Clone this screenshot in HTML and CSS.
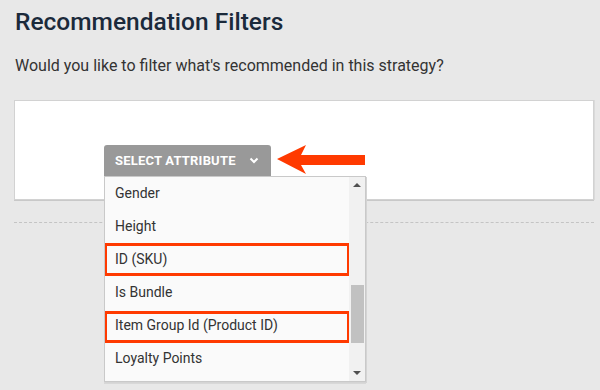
FILE: index.html
```html
<!DOCTYPE html>
<html>
<head>
<meta charset="utf-8">
<link rel="stylesheet" href="styles.css">
</head>
<body>
<div class="page">
  <h1 class="title">Recommendation Filters</h1>
  <p class="lead">Would you like to filter what's recommended in this strategy?</p>
  <div class="card">
    <div class="picker">
      <button class="select-btn">SELECT ATTRIBUTE
        <svg class="chev" width="10" height="7" viewBox="0 0 10 7"><path d="M1.5 1.5 L5 5 L8.5 1.5" fill="none" stroke="#fff" stroke-width="2"/></svg>
      </button>
      <svg class="pointer" width="90" height="30" viewBox="0 0 90 30"><polygon points="0,14 29,0 24,10 88,10 88,20 24,20 29,29" fill="#ff3a00"/></svg>
      <div class="menu">
        <ul class="options">
          <li class="opt">Gender</li>
          <li class="opt">Height</li>
          <li class="opt marked">ID (SKU)</li>
          <li class="opt">Is Bundle</li>
          <li class="opt marked marked-low">Item Group Id (Product ID)</li>
          <li class="opt">Loyalty Points</li>
        </ul>
        <div class="scroll">
          <span class="tri up"></span>
          <div class="track"><div class="thumb"></div></div>
          <span class="tri down"></span>
        </div>
      </div>
    </div>
  </div>
  <div class="divider"></div>
</div>
</body>
</html>
```
FILE: styles.css
```css
html, body {
  margin: 0;
  padding: 0;
  background: #e8e8e8;
  font-family: Roboto, "Liberation Sans", sans-serif;
}
.page {
  padding: 0 6px 0 14px;
  height: 390px;
  overflow: hidden;
}
.title {
  margin: 0;
  padding-top: 7px;
  font-size: 24.5px;
  font-weight: 500;
  line-height: 30px;
  color: #1b2a3b;
  padding-left: 1px;
}
.lead {
  margin: 19px 0 0 1px;
  font-size: 16px;
  line-height: 20px;
  color: #333;
}
.card {
  margin-top: 24px;
  background: #fff;
  border: 1px solid #d2d2d2;
  box-shadow: 0 1px 0 #c8c8c8, 1px 0 0 #dadada;
  padding: 44px 0 0 89px;
  box-sizing: border-box;
  height: 100px;
}
.picker {
  position: relative;
  width: 167px;
}
.select-btn {
  display: flex;
  align-items: center;
  justify-content: space-between;
  width: 167px;
  height: 31px;
  padding: 0 12px 0 11px;
  border: none;
  border-radius: 3px 3px 0 0;
  background: #999;
  color: #fff;
  font-family: Roboto, "Liberation Sans", sans-serif;
  font-weight: 700;
  font-size: 13px;
  letter-spacing: 0.2px;
}
.pointer {
  position: absolute;
  left: 173px;
  top: 0;
}
.menu {
  position: absolute;
  left: 0;
  top: 31px;
  width: 262px;
  height: 206px;
  box-sizing: border-box;
  background: #fafafa;
  border: 1px solid #c9c9c9;
  box-shadow: 1px 1px 0 #d4d4d4, 0 2px 0 #d8d8d8;
  display: flex;
  z-index: 2;
}
.options {
  list-style: none;
  margin: 0;
  padding: 0;
  flex: 1;
  overflow: hidden;
}
.opt {
  position: relative;
  height: 33px;
  line-height: 33px;
  padding-left: 10px;
  font-size: 14px;
  color: #333;
}
.marked::after {
  content: "";
  position: absolute;
  left: -1px;
  right: -1px;
  top: 0;
  bottom: 0;
  border: 3px solid #ff3a00;
}
.marked-low::after { top: 2px; bottom: -1px; }
.scroll {
  width: 16px;
  background: #f1f1f1;
  display: flex;
  flex-direction: column;
  align-items: center;
}
.track {
  flex: 1;
  width: 100%;
  position: relative;
}
.thumb {
  position: absolute;
  left: 2px;
  right: 1px;
  top: 93px;
  height: 58px;
  background: #c1c1c1;
}
.tri {
  width: 0;
  height: 0;
  border-left: 4px solid transparent;
  border-right: 4px solid transparent;
  margin: 5px 0;
}
.tri.up { border-bottom: 4px solid #505050; margin-top: 6px; }
.tri.down { border-top: 4px solid #505050; margin-bottom: 6px; }
.divider {
  margin-top: 22px;
  border-top: 1px dashed #c4c4c4;
  width: 580px;
}
```
